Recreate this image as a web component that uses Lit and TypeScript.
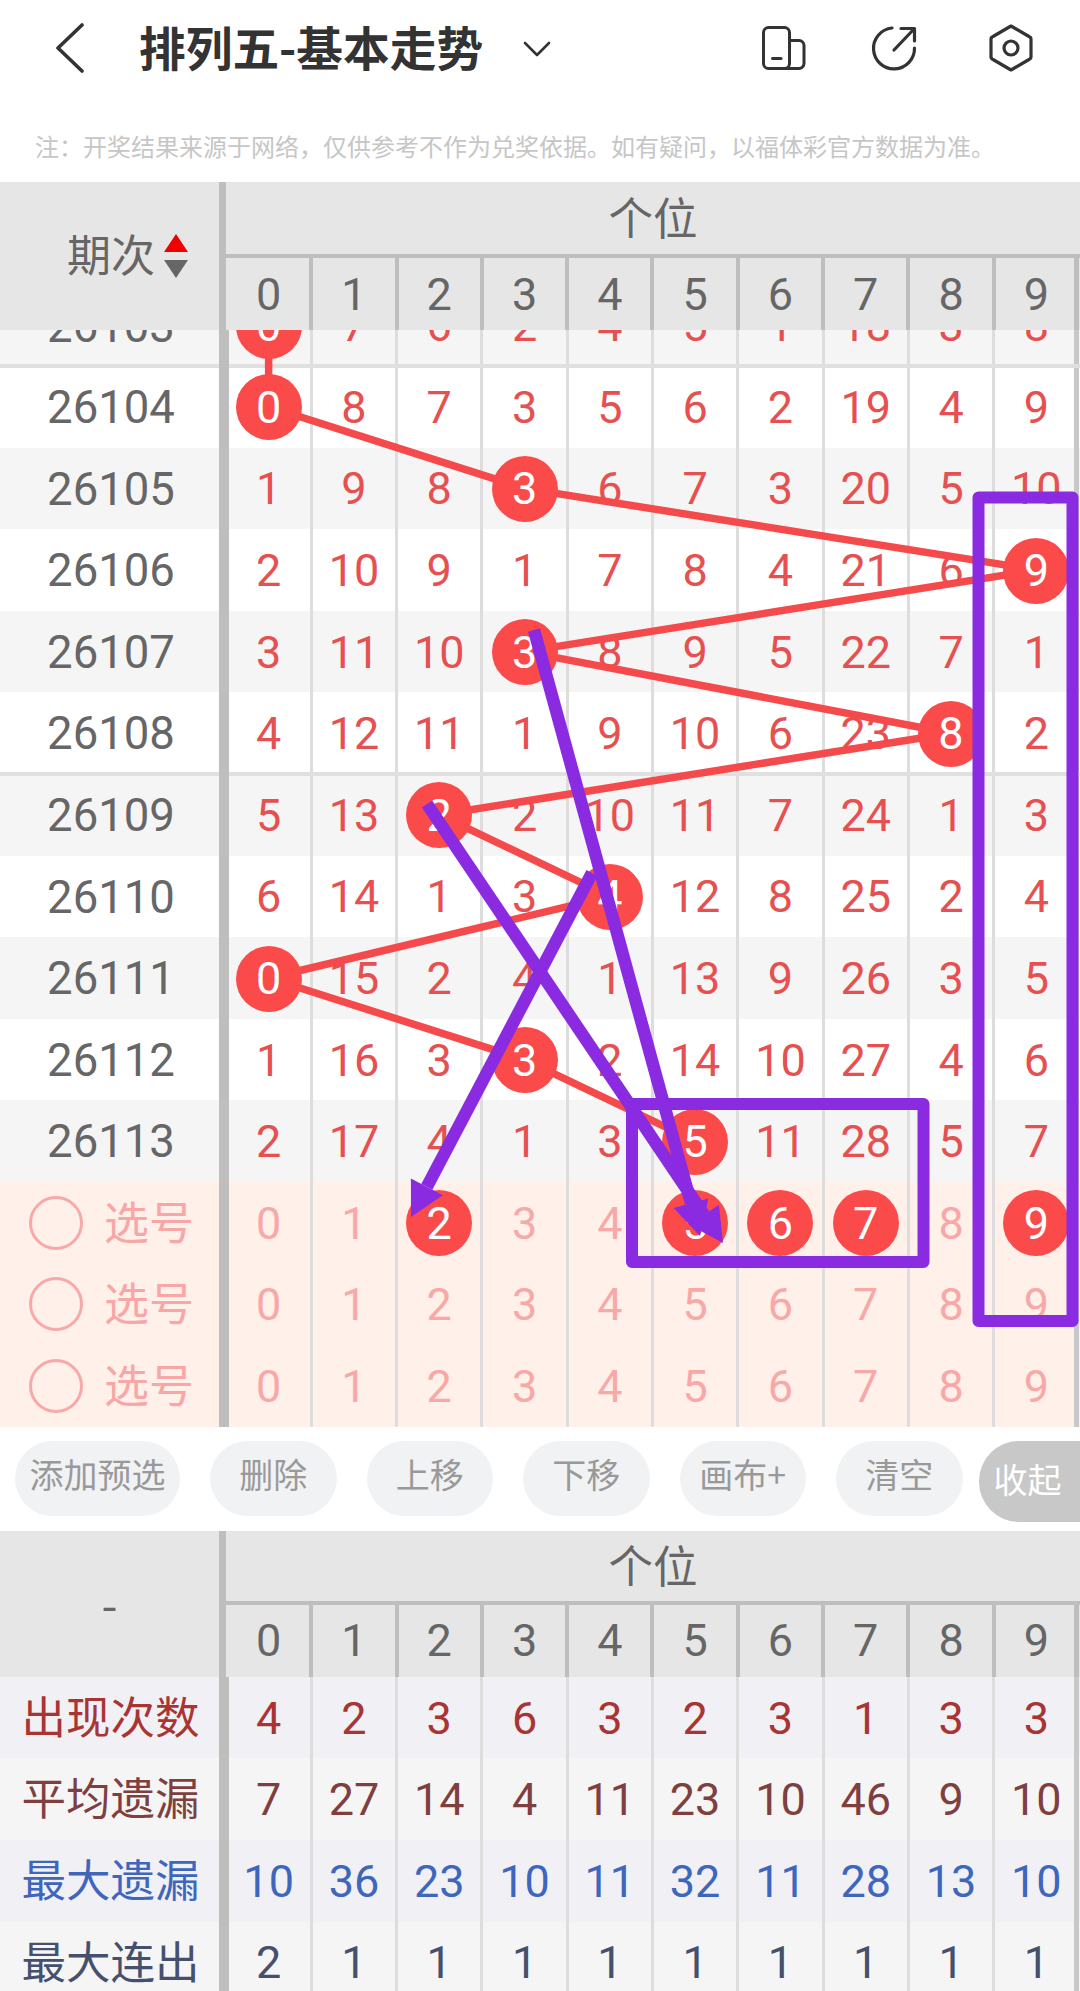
import { LitElement, html, css, svg } from "lit";
import { customElement } from "lit/decorators.js";

type Row = { id: string; nums: number[]; hit: number };

const ROWS: Row[] = [
  { id: "26103", nums: [0, 7, 6, 2, 4, 5, 1, 18, 3, 8], hit: 0 },
  { id: "26104", nums: [0, 8, 7, 3, 5, 6, 2, 19, 4, 9], hit: 0 },
  { id: "26105", nums: [1, 9, 8, 3, 6, 7, 3, 20, 5, 10], hit: 3 },
  { id: "26106", nums: [2, 10, 9, 1, 7, 8, 4, 21, 6, 9], hit: 9 },
  { id: "26107", nums: [3, 11, 10, 3, 8, 9, 5, 22, 7, 1], hit: 3 },
  { id: "26108", nums: [4, 12, 11, 1, 9, 10, 6, 23, 8, 2], hit: 8 },
  { id: "26109", nums: [5, 13, 2, 2, 10, 11, 7, 24, 1, 3], hit: 2 },
  { id: "26110", nums: [6, 14, 1, 3, 4, 12, 8, 25, 2, 4], hit: 4 },
  { id: "26111", nums: [0, 15, 2, 4, 1, 13, 9, 26, 3, 5], hit: 0 },
  { id: "26112", nums: [1, 16, 3, 3, 2, 14, 10, 27, 4, 6], hit: 3 },
  { id: "26113", nums: [2, 17, 4, 1, 3, 5, 11, 28, 5, 7], hit: 5 },
];
const DIGITS = [0, 1, 2, 3, 4, 5, 6, 7, 8, 9];
const PICKS: number[][] = [[2, 5, 6, 7, 9], [], []];
const STATS = [
  { label: "出现次数", cls: "s-count", nums: [4, 2, 3, 6, 3, 2, 3, 1, 3, 3] },
  { label: "平均遗漏", cls: "s-avg", nums: [7, 27, 14, 4, 11, 23, 10, 46, 9, 10] },
  { label: "最大遗漏", cls: "s-max", nums: [10, 36, 23, 10, 11, 32, 11, 28, 13, 10] },
  { label: "最大连出", cls: "s-run", nums: [2, 1, 1, 1, 1, 1, 1, 1, 1, 1] },
];
const BUTTONS = [
  { t: "添加预选", wide: true },
  { t: "删除" },
  { t: "上移" },
  { t: "下移" },
  { t: "画布+" },
  { t: "清空" },
];

const colX = (c: number) => 226 + 85.3 * (c + 0.5);
const rowY = (i: number) => 852 - (10 - i) * 81.6 - 40.8;

function arrow(x1: number, y1: number, x2: number, y2: number) {
  const len = Math.hypot(x2 - x1, y2 - y1);
  const dx = (x2 - x1) / len;
  const dy = (y2 - y1) / len;
  const L = 34;
  const W = 18;
  const bx = x2 - dx * L;
  const by = y2 - dy * L;
  const pts = `${x2},${y2} ${bx - dy * W},${by + dx * W} ${bx + dy * W},${by - dx * W}`;
  return svg`<line x1=${x1} y1=${y1} x2=${bx} y2=${by} stroke="#8a2be2" stroke-width="12.5"></line><polygon points=${pts} fill="#8a2be2"></polygon>`;
}

@customElement("app-root")
export class AppRoot extends LitElement {
  static styles = css`
    :host {
      display: block;
      position: relative;
      width: 1080px;
      height: 1991px;
      overflow: hidden;
      background: #fff;
      font-family: "Noto Sans CJK SC", "Noto Sans", sans-serif;
    }
    .nav {
      height: 96px;
      display: flex;
      align-items: center;
      padding: 0 45px 0 55px;
    }
    .nav svg { flex: none; fill: none; stroke: #333; stroke-linecap: round; stroke-linejoin: round; }
    .title {
      margin-left: 54px;
      padding-bottom: 4px;
      font-size: 46.7px;
      line-height: 56px;
      font-weight: 700;
      color: #333;
      white-space: nowrap;
    }
    .chev { margin-left: 40px; margin-top: 2px; }
    .icons { margin-left: auto; display: flex; gap: 62px; align-items: center; }
    .icons .last { margin-left: 7px; }
    .note {
      height: 86px;
      padding: 38px 0 0 35px;
      box-sizing: border-box;
      font-size: 24px;
      line-height: 24px;
      color: #c6c6c6;
      white-space: nowrap;
    }

    .head {
      position: relative;
      z-index: 3;
      display: grid;
      grid-template-columns: 226px 1fr;
      height: 148px;
      background: #e6e6e6;
      color: #666;
    }
    .head.stat { height: 146px; }
    .corner {
      border-right: 7px solid #bebebe;
      display: flex;
      align-items: center;
      font-size: 44px;
    }
    .corner.sort { padding-left: 67px; }
    .corner.sort span { padding-bottom: 6px; }
    .corner.sort svg { margin-left: 9px; flex: none; }
    .corner.dash { justify-content: center; font-size: 46px; padding-bottom: 4px; box-sizing: border-box; }
    .group { display: flex; flex-direction: column; }
    .pos {
      height: 72px;
      flex: none;
      box-sizing: content-box;
      display: flex;
      align-items: center;
      justify-content: center;
      font-size: 44.5px;
      line-height: 1;
      border-bottom: 4px solid #bebebe;
    }
    .pos span { padding-bottom: 4px; }
    .stat .pos { height: 70px; }
    .digits {
      flex: 1;
      display: grid;
      grid-template-columns: repeat(10, 85.3px);
      font-family: Roboto, sans-serif;
      font-size: 45px;
    }
    .digits > div {
      position: relative;
      display: flex;
      align-items: center;
      justify-content: center;
    }
    .digits > div::after {
      content: "";
      position: absolute;
      top: 0;
      bottom: 0;
      right: -2px;
      width: 4px;
      background: #bebebe;
    }
    .digits > div:last-child::after { right: 0; width: 5px; }

    .viewport {
      position: relative;
      z-index: 0;
      height: 852px;
      overflow: hidden;
      display: flex;
      flex-direction: column;
      justify-content: flex-end;
    }
    .lines {
      position: absolute;
      left: 0;
      top: 0;
      width: 1080px;
      height: 852px;
      z-index: 1;
    }
    .row {
      position: relative;
      flex: none;
      height: 81.6px;
      display: grid;
      grid-template-columns: 226px repeat(10, 85.3px);
      font-family: Roboto, sans-serif;
      font-size: 45px;
      line-height: 1;
      color: #e65050;
      background: #fff;
    }
    .row.alt { background: #f5f5f5; }
    .row.sep::after {
      content: "";
      position: absolute;
      left: 0;
      right: 0;
      bottom: -2px;
      height: 4px;
      background: #e0e0e0;
      z-index: 1;
    }
    .label {
      position: relative;
      display: flex;
      align-items: center;
      justify-content: center;
      padding: 2px 4px 0 0;
      color: #666;
      font-size: 45.5px;
    }
    .label::after {
      content: "";
      position: absolute;
      top: 0;
      bottom: 0;
      right: -3px;
      width: 10px;
      background: #bebebe;
      z-index: 2;
    }
    .cell {
      position: relative;
      display: flex;
      align-items: center;
      justify-content: center;
      padding-top: 1px;
    }
    .cell::after {
      content: "";
      position: absolute;
      top: 0;
      bottom: 0;
      right: -1.5px;
      width: 3px;
      background: #dddddd;
    }
    .cell:last-child::after { right: 0; width: 5px; background: #c8c8c8; }
    .ball {
      position: relative;
      z-index: 2;
      width: 66px;
      height: 66px;
      flex: none;
      border-radius: 50%;
      background: #fb4a4a;
      color: #fff;
      display: flex;
      align-items: center;
      justify-content: center;
    }
    .pick { background: #fff0ea; color: #f9a8a8; }
    .pick .label {
      color: #f9a6a6;
      font-family: "Noto Sans CJK SC", sans-serif;
      font-size: 45px;
      justify-content: flex-start;
      padding: 0 0 0 29px;
      gap: 21px;
    }
    .pick .label span:last-child { padding-bottom: 5px; }
    .radio {
      width: 54px;
      height: 54px;
      box-sizing: border-box;
      border: 3px solid #f9a8a8;
      border-radius: 50%;
      flex: none;
    }

    .actions {
      height: 104px;
      box-sizing: border-box;
      padding: 14px 0 0 15px;
      display: flex;
      align-items: flex-start;
      gap: 30px;
    }
    .btn {
      width: 126.5px;
      height: 75px;
      flex: none;
      box-sizing: border-box;
      padding-bottom: 9px;
      border-radius: 38px;
      background: #f1f2f4;
      color: #999;
      font-size: 34px;
      display: flex;
      align-items: center;
      justify-content: center;
      white-space: nowrap;
    }
    .btn.wide { width: 165px; }
    .fold {
      margin-left: -14px;
      width: 103px;
      height: 81px;
      flex: none;
      box-sizing: border-box;
      padding: 0 0 5px 15px;
      border-radius: 40px 0 0 40px;
      background: #c8c8c8;
      color: #fff;
      font-size: 34px;
      display: flex;
      align-items: center;
      white-space: nowrap;
    }

    .stats .row { background: #f0f0f5; }
    .stats .row:nth-child(even) { background: #f5f5f5; }
    .stats .label {
      font-family: "Noto Sans CJK SC", sans-serif;
      font-size: 44.5px;
      padding: 0 5px 5px 0;
      box-sizing: border-box;
    }
    .s-count, .s-count .label { color: #a83434; }
    .s-avg, .s-avg .label { color: #7f3f3f; }
    .s-max, .s-max .label { color: #3e66bd; }
    .s-run, .s-run .label { color: #45506f; }

    .marks {
      position: absolute;
      left: 0;
      top: 0;
      width: 1080px;
      height: 1991px;
      z-index: 10;
      pointer-events: none;
    }
  `;

  private header(stat: boolean) {
    return html`<div class="head ${stat ? "stat" : ""}">
      ${stat
        ? html`<div class="corner dash">-</div>`
        : html`<div class="corner sort">
            <span>期次</span>
            <svg width="24" height="44" viewBox="0 0 24 44">
              <polygon points="12,0 24,18 0,18" fill="#f00000"></polygon>
              <polygon points="0,26 24,26 12,44" fill="#666"></polygon>
            </svg>
          </div>`}
      <div class="group">
        <div class="pos"><span>个位</span></div>
        <div class="digits">${DIGITS.map((d) => html`<div>${d}</div>`)}</div>
      </div>
    </div>`;
  }

  render() {
    const poly = ROWS.map((r, i) => `${colX(r.hit)},${rowY(i)}`).join(" ");
    return html`
      <div class="nav">
        <svg width="30" height="50" viewBox="0 0 30 50" stroke-width="3.6">
          <path d="M27 2 L3 25 L27 48"></path>
        </svg>
        <div class="title">排列五-基本走势</div>
        <svg class="chev" width="28" height="17" viewBox="0 0 28 17" stroke-width="2.6">
          <path d="M2 2 L14 14 L26 2"></path>
        </svg>
        <div class="icons">
          <svg width="48" height="48" viewBox="0 0 48 48" stroke-width="3">
            <rect x="3.5" y="3.5" width="26" height="41" rx="5"></rect>
            <path d="M29.5 16.5 H39 a5 5 0 0 1 5 5 V39.5 a5 5 0 0 1 -5 5 H24"></path>
            <path d="M12.5 34.5 H21"></path>
          </svg>
          <svg width="48" height="48" viewBox="0 0 48 48" stroke-width="3.2">
            <path d="M22 4 A20.5 20.5 0 1 0 44.5 24"></path>
            <path d="M24 26 L44 5"></path>
            <path d="M31 4.5 H44.5 V17"></path>
          </svg>
          <svg class="last" width="48" height="50" viewBox="0 0 48 50" stroke-width="3.2">
            <path d="M24 3 L42 13.5 a3 3 0 0 1 2 3 V33.5 a3 3 0 0 1 -2 3 L24 47 L6 36.5 a3 3 0 0 1 -2 -3 V16.5 a3 3 0 0 1 2 -3 Z"></path>
            <circle cx="24" cy="25" r="7"></circle>
          </svg>
        </div>
      </div>
      <div class="note">注：开奖结果来源于网络，仅供参考不作为兑奖依据。如有疑问，以福体彩官方数据为准。</div>

      ${this.header(false)}
      <div class="viewport">
        ${ROWS.map(
          (r, i) => html`<div class="row ${i % 2 === 0 ? "alt" : ""} ${i === 0 || i === 5 ? "sep" : ""}">
            <div class="label">${r.id}</div>
            ${r.nums.map(
              (n, c) => html`<div class="cell">${c === r.hit ? html`<span class="ball">${n}</span>` : n}</div>`
            )}
          </div>`
        )}
        <svg class="lines" viewBox="0 0 1080 852">
          <polyline points=${poly} fill="none" stroke="#f54a4c" stroke-width="7.5" stroke-linejoin="round"></polyline>
        </svg>
      </div>
      ${PICKS.map(
        (p) => html`<div class="row pick">
          <div class="label"><span class="radio"></span><span>选号</span></div>
          ${DIGITS.map(
            (d) => html`<div class="cell">${p.includes(d) ? html`<span class="ball">${d}</span>` : d}</div>`
          )}
        </div>`
      )}

      <div class="actions">
        ${BUTTONS.map((b) => html`<div class="btn ${b.wide ? "wide" : ""}">${b.t}</div>`)}
        <div class="fold">收起</div>
      </div>

      ${this.header(true)}
      <div class="stats">
        ${STATS.map(
          (s) => html`<div class="row ${s.cls}">
            <div class="label">${s.label}</div>
            ${s.nums.map((n) => html`<div class="cell">${n}</div>`)}
          </div>`
        )}
      </div>

      <svg class="marks" viewBox="0 0 1080 1991">
        <g fill="none" stroke="#8a2be2" stroke-width="12" stroke-linejoin="round">
          <rect x="978.5" y="497.5" width="94" height="823.5"></rect>
          <rect x="632" y="1104" width="291.5" height="158"></rect>
        </g>
        ${arrow(534, 630, 700, 1236)}
        ${arrow(427, 804, 723, 1243)}
        ${arrow(592, 873, 411, 1217)}
      </svg>
    `;
  }
}
